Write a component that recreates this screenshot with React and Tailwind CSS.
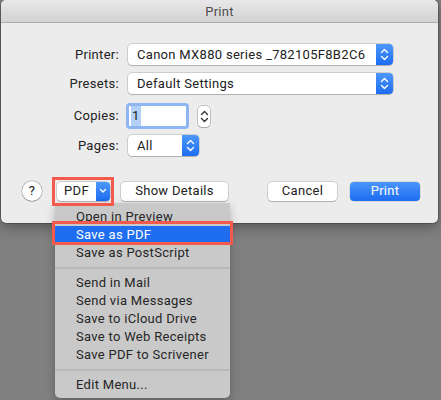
const UpDown = () => (
  <svg width="9" height="13" viewBox="0 0 9 13" fill="none">
    <path d="M1.5 4.5L4.5 1.5L7.5 4.5" stroke="currentColor" strokeWidth="1.4" strokeLinecap="round" strokeLinejoin="round" />
    <path d="M1.5 8.5L4.5 11.5L7.5 8.5" stroke="currentColor" strokeWidth="1.4" strokeLinecap="round" strokeLinejoin="round" />
  </svg>
);

const Popup = ({ width, children }) => (
  <div
    className="flex h-[21px] items-stretch rounded-[4px] bg-white shadow-[0_0_0_0.5px_rgba(0,0,0,0.25),0_1px_1px_rgba(0,0,0,0.15)]"
    style={{ width }}
  >
    <div className="flex flex-1 items-center pl-[9px] text-[13px] text-[#222]">{children}</div>
    <div className="flex w-[17px] items-center justify-center rounded-r-[4px] bg-gradient-to-b from-[#4d97fa] to-[#1c6cf1] text-white">
      <UpDown />
    </div>
  </div>
);

const Label = ({ children }) => (
  <div className="w-[119px] shrink-0 pr-[1px] text-right text-[13px] text-[#222]">{children}</div>
);

const menuItems = [
  ["Open in Preview"],
  ["Save as PDF", true],
  ["Save as PostScript"],
  "sep",
  ["Send in Mail"],
  ["Send via Messages"],
  ["Save to iCloud Drive"],
  ["Save to Web Receipts"],
  ["Save PDF to Scrivener"],
  "sep",
  ["Edit Menu..."],
];

export default function App() {
  return (
    <div
      className="relative h-[400px] w-[441px] overflow-hidden bg-[#808080] tracking-[0.3px]"
      style={{ fontFamily: "Roboto, 'Noto Sans', sans-serif" }}
    >
      <div className="ml-[1px] h-[223px] w-[437px] overflow-hidden rounded-[5px] bg-[#ececec] shadow-[0_4px_14px_rgba(0,0,0,0.35),0_0_0_0.5px_rgba(0,0,0,0.4)]">
        <div className="flex h-[23px] items-center justify-center border-b border-[#adadad] bg-gradient-to-b from-[#e9e7e9] to-[#d3d3d3] pt-[2px] text-[13px] text-[#4d4d4d]">
          Print
        </div>

        <div className="flex flex-col pt-[21px]">
          <div className="flex items-center gap-[8px]">
            <Label>Printer:</Label>
            <Popup width={265}>Canon MX880 series _782105F8B2C6</Popup>
          </div>
          <div className="mt-[8px] flex items-center gap-[8px]">
            <Label>Presets:</Label>
            <Popup width={265}>Default Settings</Popup>
          </div>
          <div className="mt-[9px] flex items-center gap-[8px]">
            <Label>Copies:</Label>
            <div className="ml-[-2px] flex h-[26px] w-[63px] items-center rounded-[4px] border-[3px] border-[#8db6f2] bg-white pl-[2px] text-[13px] text-[#222]">
              <span className="bg-[#b3d1f7] px-[1px]">1</span>
            </div>
            <div className="ml-[1px] flex h-[21px] w-[12px] items-center justify-center rounded-[4px] bg-white text-[#333] shadow-[0_0_0_0.5px_rgba(0,0,0,0.35),0_1px_1px_rgba(0,0,0,0.15)]">
              <UpDown />
            </div>
          </div>
          <div className="mt-[6px] flex items-center gap-[8px]">
            <Label>Pages:</Label>
            <Popup width={71}>All</Popup>
          </div>
        </div>

        <div className="mt-[25px] flex items-center">
          <div className="ml-[21px] flex h-[20px] w-[20px] items-center justify-center rounded-full bg-white text-[13px] text-[#222] shadow-[0_0_0_0.5px_rgba(0,0,0,0.35),0_1px_1px_rgba(0,0,0,0.15)]">
            ?
          </div>
          <div className="ml-[15px] flex h-[19px] w-[53px] items-stretch rounded-[4px] bg-white shadow-[0_0_0_0.5px_rgba(0,0,0,0.25),0_1px_1px_rgba(0,0,0,0.15)]">
            <div className="flex flex-1 items-center justify-center text-[13px] text-[#222]">PDF</div>
            <div className="flex w-[14px] items-center justify-center rounded-r-[4px] bg-gradient-to-b from-[#4d97fa] to-[#1c6cf1] text-white">
              <svg width="8" height="6" viewBox="0 0 8 6" fill="none">
                <path d="M1.5 1.5L4 4L6.5 1.5" stroke="currentColor" strokeWidth="1.3" strokeLinecap="round" strokeLinejoin="round" />
              </svg>
            </div>
          </div>
          <div className="ml-[11px] flex h-[19px] w-[107px] items-center justify-center rounded-[4px] bg-white text-[13px] text-[#222] shadow-[0_0_0_0.5px_rgba(0,0,0,0.25),0_1px_1px_rgba(0,0,0,0.15)]">
            Show Details
          </div>
          <div className="ml-[40px] flex h-[19px] w-[69px] items-center justify-center rounded-[4px] bg-white text-[13px] text-[#222] shadow-[0_0_0_0.5px_rgba(0,0,0,0.25),0_1px_1px_rgba(0,0,0,0.15)]">
            Cancel
          </div>
          <div className="ml-[13px] flex h-[19px] w-[70px] items-center justify-center rounded-[4px] bg-gradient-to-b from-[#4a95fa] to-[#1c6cf1] text-[13px] text-white shadow-[0_0_0_0.5px_rgba(0,0,0,0.15)]">
            Print
          </div>
        </div>
      </div>

      {/* dropdown menu */}
      <div className="absolute left-[55px] top-[203px] w-[175px] rounded-b-[5px] bg-[#c9c9c9] pb-[4px] pt-[5px] shadow-[0_4px_10px_rgba(0,0,0,0.25)]">
        {menuItems.map((item, i) =>
          item === "sep" ? (
            <div key={i} className="flex h-[12px] items-center">
              <div className="h-[2px] w-full bg-[#b9b9b9]" />
            </div>
          ) : (
            <div
              key={i}
              className={`flex h-[18px] items-center pl-[21px] text-[13px] ${item[1] ? "bg-[#1f6ef1] text-white" : "text-[#262626]"}`}
            >
              {item[0]}
            </div>
          )
        )}
      </div>

      {/* annotation boxes */}
      <div className="absolute left-[52px] top-[177px] h-[29px] w-[62px] border-[3px] border-[#f25a4e]" />
      <div className="absolute left-[52px] top-[221px] h-[24px] w-[181px] border-[3px] border-[#f25a4e]" />
    </div>
  );
}
